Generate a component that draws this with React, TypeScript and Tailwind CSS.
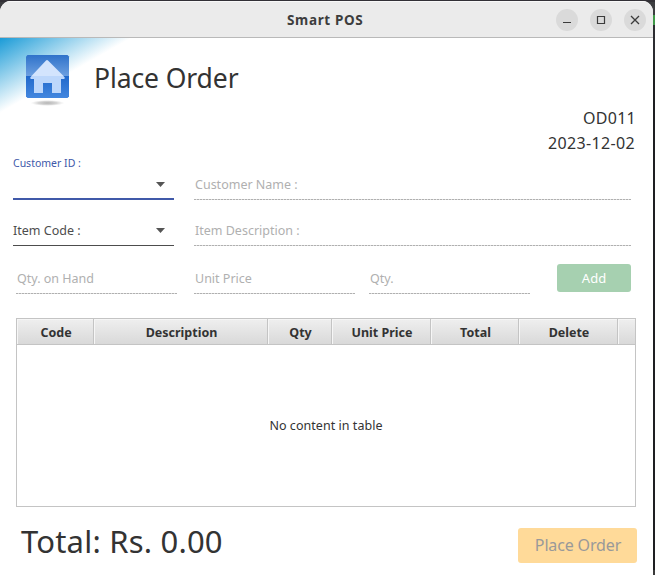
import React from 'react';

const dashes = 'h-px bg-[repeating-linear-gradient(90deg,#b0b0b0_0_2px,#dedede_2px_3px)]';

function Field({ label, className }: { label: string; className: string }) {
  return (
    <div className={`flex shrink-0 flex-col justify-end ${className}`}>
      <div className="pl-px text-[12.5px] leading-[18px] whitespace-nowrap text-[#b0b0b0]">{label}</div>
      <div className={`mt-[5px] ${dashes}`} />
    </div>
  );
}

function Caret() {
  return (
    <svg width="9" height="5" viewBox="0 0 9 5" className="mr-[9px] shrink-0">
      <path d="M0 0H9L4.5 5Z" fill="#555" />
    </svg>
  );
}

function HomeIcon() {
  return (
    <svg width="44" height="52" viewBox="0 0 44 52" className="shrink-0">
      <defs>
        <linearGradient id="top" x1="0" y1="0" x2="0" y2="1">
          <stop offset="0" stopColor="#2f72ca" />
          <stop offset="1" stopColor="#6c9fe0" />
        </linearGradient>
        <linearGradient id="bottom" x1="0" y1="0" x2="0" y2="1">
          <stop offset="0" stopColor="#2068cb" />
          <stop offset="1" stopColor="#4387df" />
        </linearGradient>
        <radialGradient id="shade">
          <stop offset="0" stopColor="#999" stopOpacity=".75" />
          <stop offset=".55" stopColor="#aaa" stopOpacity=".5" />
          <stop offset="1" stopColor="#ccc" stopOpacity="0" />
        </radialGradient>
      </defs>
      <ellipse cx="21.500" cy="48" rx="17" ry="3" fill="url(#shade)" />
      <path d="M1.5 0H41.5L43 1.5V21H0V1.5Z" fill="url(#top)" />
      <path d="M0 21H43V41.5L41.5 43H1.5L0 41.5Z" fill="url(#bottom)" />
      <path d="M20 5.500Q21 4.500 22 5.500L37.500 21H5.500Z" fill="#d3e4fd" />
      <path d="M5.500 21H37.500L39 23L38 24H35V38H26V28H17V38H8V24H5L4 23Z" fill="#bdd7fb" />
    </svg>
  );
}

function WindowButton({ children }: { children: React.ReactNode }) {
  return (
    <div className="size-[22px] rounded-full bg-[#dadada]">
      <svg width="22" height="22" viewBox="0 0 22 22" fill="none" stroke="#3b3b3b">{children}</svg>
    </div>
  );
}

const columns = [
  { name: 'Code', width: 'w-[77px]' },
  { name: 'Description', width: 'w-[174px]' },
  { name: 'Qty', width: 'w-[64px]' },
  { name: 'Unit Price', width: 'w-[99px]' },
  { name: 'Total', width: 'w-[88px]' },
  { name: 'Delete', width: 'w-[99px]' },
  { name: '', width: 'w-[17px]' },
];

export default function App() {
  return (
    <div className="h-[575px] w-[655px] overflow-hidden bg-[linear-gradient(#323036_0_2px,#3c3d40_2px_15px,#3f9a48_15px_25px,#2c2d31_25px_60px,#1e1f22_60px_570px,#3a3a3a_570px)] pt-px font-['Noto_Sans',sans-serif] text-[#333]">
      <div className="flex h-[574px] w-[653px] flex-col overflow-hidden rounded-t-[11px] bg-white">
        <header className="flex h-[37px] shrink-0 items-center border-t border-b border-t-[#f8f8f8] border-b-[#b9b9b9] bg-[#ebebeb]">
          <div className="w-[556px] pt-[2px] pl-[287px] text-[13.5px] font-bold tracking-[0.65px] text-[#3d3d3d]">Smart POS</div>
          <div className="flex gap-3">
            <WindowButton><path d="M7 13.500H15" /></WindowButton>
            <WindowButton><path d="M7.500 7.500H14.500V14.500H7.500Z" strokeWidth="1.2" /></WindowButton>
            <WindowButton><path d="M7 7L15 15M15 7L7 15" strokeWidth="1.3" /></WindowButton>
          </div>
        </header>

        <div className="flex h-[68px] shrink-0 items-start">
          <div className="flex h-[76px] w-full items-start bg-[linear-gradient(150.3deg,#1a9bd7_0,#fff_65px)] pl-[26px]">
            <div className="mt-[17px]"><HomeIcon /></div>
            <h1 className="mt-[20px] ml-[24px] text-[26.5px] leading-[40px] tracking-[-0.1px] whitespace-nowrap">Place Order</h1>
          </div>
        </div>

        <div className="flex h-[50px] shrink-0 flex-col items-end pr-[17px] text-[16px] leading-[25px]">
          <div className="tracking-[0.25px]">OD011</div>
          <div className="pr-px tracking-[0.35px]">2023-12-02</div>
        </div>

        <div className="flex h-[44px] shrink-0 pl-[13px]">
          <div className="flex w-[161px] flex-col border-b-2 border-[#4059a9]">
            <div className="text-[10.5px] leading-[14px] text-[#4059a9]">Customer ID :</div>
            <div className="mt-[12px] flex justify-end"><Caret /></div>
          </div>
          <Field label="Customer Name :" className="ml-5 w-[437px]" />
        </div>

        <div className="flex h-[46px] shrink-0 pl-[13px]">
          <div className="flex w-[161px] items-end justify-between border-b border-[#4d4d4d] pb-[5px]">
            <span className="text-[12.5px] leading-[18px] text-[#4d4d4d]">Item Code :</span>
            <div className="pb-[7px]"><Caret /></div>
          </div>
          <Field label="Item Description :" className="ml-5 w-[437px]" />
        </div>

        <div className="flex h-[48px] shrink-0 pl-4">
          <Field label="Qty. on Hand" className="w-[161px]" />
          <Field label="Unit Price" className="ml-[17px] w-[161px]" />
          <Field label="Qty." className="ml-[14px] w-[161px]" />
          <button className="mt-[18px] ml-[27px] h-[28px] w-[74px] rounded-[3px] bg-[#a6d0b0] pt-[2px] text-[13px] text-white">Add</button>
        </div>

        <div className="mt-6 ml-4 flex h-[189px] w-[620px] shrink-0 flex-col border border-[#c4c4c4]">
          <div className="flex h-[26px] border-b border-[#c4c4c4]">
            {columns.map((c, i) => (
              <div key={i} className={`flex shrink-0 items-center justify-center border-r border-[#c4c4c4] bg-linear-to-b from-[#efefef] to-[#d9d9d9] pt-[3px] pl-[2px] text-[12.5px] font-bold whitespace-nowrap shadow-[inset_1px_1px_0_#f6f6f6] last:border-r-0 ${c.width}`}>
                {c.name}
              </div>
            ))}
          </div>
          <div className="flex flex-1 items-center justify-center pt-[2px] text-[12.5px] tracking-[0.04px]">No content in table</div>
        </div>

        <div className="flex pt-[21px] pl-[21px]">
          <div className="mt-[-2px] w-[497px] text-[31px] leading-[30px] tracking-[0.2px] whitespace-nowrap">Total: Rs. 0.00</div>
          <button className="h-[35px] w-[119px] rounded-[3px] bg-[#ffda99] pl-px text-[16px] leading-[33px] tracking-[-0.15px] whitespace-nowrap text-[#999]">Place Order</button>
        </div>
      </div>
    </div>
  );
}
